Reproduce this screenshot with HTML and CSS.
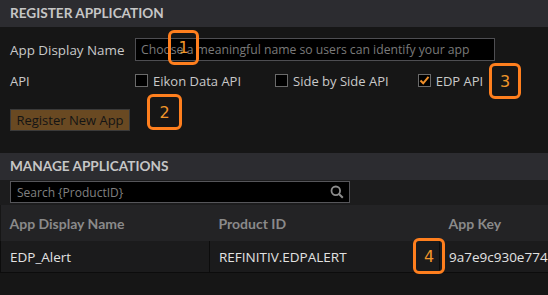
FILE: index.html
```html
<!DOCTYPE html>
<html lang="en">
<head>
  <meta charset="UTF-8">
  <title>Register Application</title>
  <link rel="stylesheet" href="styles.css">
</head>
<body>
  <div class="page">
    <div class="section-head">Register Application</div>
    <div class="register">
      <div class="field-row">
        <label class="field-label name-label" for="appName">App Display Name</label>
        <input type="text" id="appName" placeholder="Choose a meaningful name so users can identify your app">
      </div>
      <div class="field-row api-row">
        <span class="field-label">API</span>
        <div class="api-options">
          <label class="check"><span class="box"></span>Eikon Data API</label>
          <label class="check"><span class="box"></span>Side by Side API</label>
          <label class="check"><span class="box checked">
            <svg width="11" height="11" viewBox="0 0 11 11"><path d="M1.5 5.5 L4.2 8.3 L9.5 1.8" fill="none" stroke="#f0902a" stroke-width="2"/></svg>
          </span>EDP API</label>
        </div>
      </div>
      <button class="btn-register">Register New App</button>
    </div>

    <div class="section-head">Manage Applications</div>
    <div class="search-row">
      <div class="search">
        <input type="text" placeholder="Search {ProductID}">
        <svg class="search-icon" width="14" height="14" viewBox="0 0 14 14"><circle cx="5.8" cy="5.8" r="4.3" fill="none" stroke="#8c8c8c" stroke-width="1.8"/><path d="M9 9 L12.8 12.8" stroke="#8c8c8c" stroke-width="2"/></svg>
      </div>
    </div>

    <table class="apps">
      <thead>
        <tr>
          <th class="col-name">App Display Name</th>
          <th class="col-product">Product ID</th>
          <th class="col-key">App Key</th>
        </tr>
      </thead>
      <tbody>
        <tr>
          <td>EDP_Alert</td>
          <td>REFINITIV.EDPALERT</td>
          <td>9a7e9c930e774</td>
        </tr>
      </tbody>
    </table>

    <div class="marker m1">1</div>
    <div class="marker m2">2</div>
    <div class="marker m3">3</div>
    <div class="marker m4">4</div>
  </div>
</body>
</html>
```

FILE: styles.css
```css
body {
  margin: 0;
  background-color: #161616;
  font-family: "Open Sans", "Liberation Sans", sans-serif;
  font-size: 13px;
  color: #c9c9c9;
  overflow: hidden;
}

.page {
  position: relative;
  width: 548px;
  height: 295px;
  overflow: hidden;
}

.section-head {
  height: 27px;
  line-height: 27px;
  padding-left: 10px;
  background-color: #2c2c30;
  color: #c6c6c6;
  font-family: Lato, "Open Sans", sans-serif;
  font-weight: bold;
  font-size: 13.6px;
  text-transform: uppercase;
}

.register {
  height: 126px;
  padding-top: 11px;
  box-sizing: border-box;
}

.field-row {
  display: flex;
  align-items: center;
  padding-left: 10px;
}

.field-label {
  width: 125px;
  flex: none;
  white-space: nowrap;
}

.name-label {
  font-size: 13.4px;
}

.field-row input {
  width: 360px;
  height: 23px;
  box-sizing: border-box;
  background-color: #000;
  border: 1px solid #4e4e52;
  padding: 0 5px;
  color: #ccc;
  font-family: inherit;
  font-size: 12.2px;
}

.field-row input::placeholder {
  color: #7a7a7a;
}

.api-row {
  margin-top: 8px;
  height: 23px;
}

.api-options {
  display: flex;
  align-items: center;
}

.check {
  display: flex;
  align-items: center;
  gap: 5px;
  white-space: nowrap;
  margin-right: 34px;
}

.check + .check + .check {
  margin-left: -5px;
}

.box {
  width: 13px;
  height: 13px;
  box-sizing: border-box;
  border: 1px solid #6a6a6a;
  background-color: #000;
  display: flex;
  align-items: center;
  justify-content: center;
}

.btn-register {
  margin: 17px 0 0 10px;
  width: 120px;
  height: 22px;
  background-color: #694922;
  border: 1px solid #3a3a3a;
  color: #141414;
  font-family: inherit;
  font-size: 13px;
  padding: 0;
}

.search-row {
  height: 25px;
  background-color: #1c1c1d;
  padding: 1px 0 0 10px;
  box-sizing: border-box;
}

.search {
  position: relative;
  width: 340px;
  height: 22px;
}

.search input {
  width: 100%;
  height: 100%;
  box-sizing: border-box;
  background-color: #000;
  border: 1px solid #56565a;
  padding: 0 6px;
  color: #ccc;
  font-family: inherit;
  font-size: 12px;
}

.search input::placeholder {
  color: #808080;
}

.search-icon {
  position: absolute;
  right: 6px;
  top: 4px;
}

.apps {
  border-collapse: collapse;
  table-layout: fixed;
  width: 700px;
}

.apps th {
  height: 36px;
  background-color: #232325;
  color: #8a8a8a;
  font-family: Lato, "Open Sans", sans-serif;
  font-weight: bold;
  font-size: 14px;
  text-align: left;
  padding: 0 9px;
}

.apps td {
  height: 31px;
  background-color: #1b1b1c;
  color: #e2e2e2;
  font-size: 13.5px;
  padding: 0 9px;
  white-space: nowrap;
  overflow: hidden;
  border-left: 1px solid #0c0c0c;
  border-bottom: 1px solid #0c0c0c;
}

.col-name { width: 191px; }
.col-product { width: 212px; }

.marker {
  position: absolute;
  box-sizing: border-box;
  border: 3px solid #ff7f1e;
  border-radius: 6px;
  color: #f0962a;
  font-family: "DejaVu Sans", sans-serif;
  font-size: 16px;
  display: flex;
  align-items: center;
  justify-content: center;
}

.m1 { left: 168px; top: 30px; width: 31px; height: 35px; }
.m2 { left: 147px; top: 94px; width: 35px; height: 36px; }
.m3 { left: 489px; top: 63px; width: 32px; height: 36px; }
.m4 { left: 413px; top: 238px; width: 32px; height: 36px; }
```
